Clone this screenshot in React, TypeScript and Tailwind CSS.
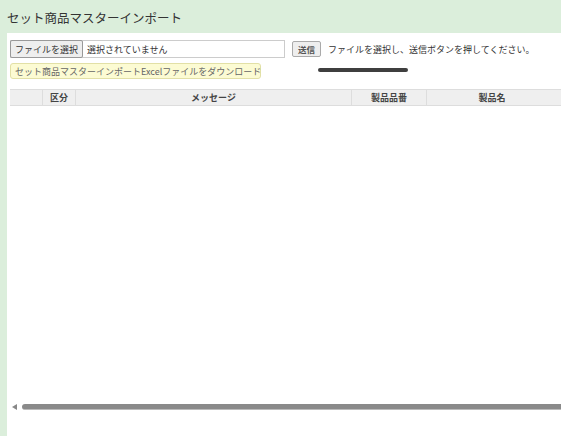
function App() {
  return (
    <div
      className="w-[561px] h-[436px] overflow-hidden bg-[#dbeedb] flex flex-col text-[#333]"
      style={{ fontFamily: '"Noto Sans CJK JP", "Open Sans", sans-serif' }}
    >
      <div className="h-[33px] shrink-0 flex items-center pl-[7px]">
        <h1 className="text-[12.5px] font-normal leading-none pt-[4px]">セット商品マスターインポート</h1>
      </div>
      <div className="flex-1 ml-[7px] bg-white flex flex-col">
        <div className="flex items-center pt-[7px] pl-[3px]">
          <div className="w-[275px] h-[18px] border border-[#ccc] flex items-center">
            <button className="h-[18px] -ml-px px-[4px] border border-[#999] rounded-[2px] bg-[#eee] text-[9px] leading-none">
              ファイルを選択
            </button>
            <span className="ml-[4px] text-[9px] leading-none">選択されていません</span>
          </div>
          <button className="ml-[7px] h-[16px] px-[5px] border border-[#aaa] rounded-[2px] bg-[#eee] text-[8.5px] leading-none font-bold text-[#555]">
            送信
          </button>
          <span className="ml-[7px] text-[9px] leading-none">ファイルを選択し、送信ボタンを押してください。</span>
        </div>
        <div className="flex items-start mt-[5px] pl-[3px]">
          <div className="h-[16px] w-[251px] px-[4px] bg-[#fcfbd3] border border-[#e2e0a6] rounded-[3px] flex items-center text-[9px] leading-none text-[#666] whitespace-nowrap">
            セット商品マスターインポートExcelファイルをダウンロード
          </div>
          <div className="ml-[57px] mt-[5px] w-[90px] h-[4px] rounded-full bg-[#3f3f3f]" />
        </div>
        <div className="mt-[10px] ml-[3px] flex h-[17px] bg-[#efefef] border-y border-[#ddd] text-[9px] font-bold leading-none text-[#444]">
          <div className="w-[33px] border-r border-[#ddd]" />
          <div className="w-[33px] border-r border-[#ddd] flex items-center justify-center">区分</div>
          <div className="w-[276px] border-r border-[#ddd] flex items-center justify-center">メッセージ</div>
          <div className="w-[75px] border-r border-[#ddd] flex items-center justify-center">製品品番</div>
          <div className="flex-1 flex items-center justify-center pr-[4px]">製品名</div>
        </div>
        <div className="flex-1" />
        <div className="flex items-center pl-[5px] mb-[26px]">
          <svg width="5" height="6" viewBox="0 0 5 6">
            <path d="M5 0 L0 3 L5 6 Z" fill="#888" />
          </svg>
          <div className="ml-[5px] flex-1 h-[6px] rounded-l-full bg-[#8a8a8a] border-b border-[#bbb]" />
        </div>
      </div>
    </div>
  )
}

export default App
